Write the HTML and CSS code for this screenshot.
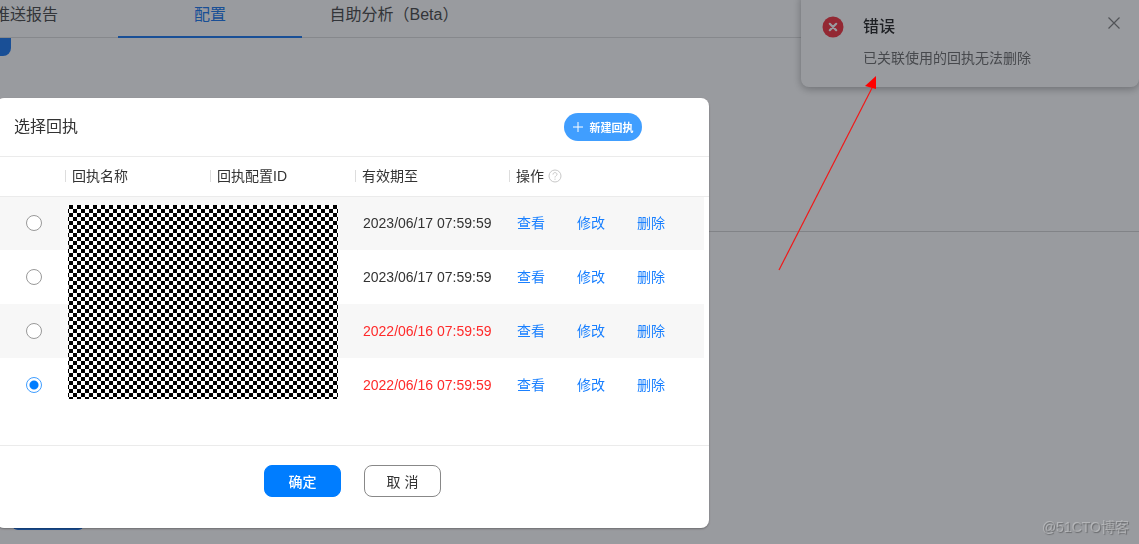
FILE: index.html
```html
<!DOCTYPE html>
<html lang="zh-CN">
<head>
    <meta charset="UTF-8">
    <meta name="viewport" content="width=device-width, initial-scale=1.0">
    <title>选择回执</title>
    <link rel="stylesheet" href="styles.css">
</head>
<body>
    <!-- 底层页面 -->
    <div class="page">
        <nav class="tabs">
            <a href="#" class="tab">推送报告</a>
            <a href="#" class="tab active">配置</a>
            <a href="#" class="tab">自助分析（Beta）</a>
        </nav>
        <div class="section">
            <div class="section-tag"></div>
        </div>
        <button type="button" class="page-btn" aria-label="保存"></button>
    </div>

    <!-- 错误通知 -->
    <div class="notification" role="alert">
        <svg class="error-icon" viewBox="0 0 22 22">
            <circle cx="11" cy="11" r="10.5" fill="#f5404c"/>
            <path d="M7.8 7.8l6.4 6.4M14.2 7.8l-6.4 6.4" stroke="#fff" stroke-width="2.2" stroke-linecap="round"/>
        </svg>
        <div class="notification-body">
            <h2 class="notification-title">错误</h2>
            <p class="notification-text">已关联使用的回执无法删除</p>
        </div>
        <button type="button" class="close-btn" aria-label="关闭">
            <svg viewBox="0 0 12 12"><path d="M.5 .5l11 11M11.5 .5l-11 11" stroke="#888" stroke-width="1.2"/></svg>
        </button>
    </div>

    <!-- 遮罩和对话框 -->
    <div class="mask">
        <div class="dialog" role="dialog" aria-labelledby="dialog-title">
            <div class="dialog-header">
                <h1 class="dialog-title" id="dialog-title">选择回执</h1>
                <button type="button" class="create-btn">
                    <svg viewBox="0 0 10 10"><path d="M5 0v10M0 5h10" stroke="#fff" stroke-width="1"/></svg>
                    <span>新建回执</span>
                </button>
            </div>
            <div class="dialog-body">
                <table class="receipt-table">
                    <colgroup>
                        <col class="col-radio">
                        <col class="col-name">
                        <col class="col-id">
                        <col class="col-date">
                        <col>
                        <col class="col-gutter">
                    </colgroup>
                    <thead>
                        <tr>
                            <th></th>
                            <th><span class="head">回执名称</span></th>
                            <th><span class="head">回执配置ID</span></th>
                            <th><span class="head">有效期至</span></th>
                            <th>
                                <span class="head">操作
                                    <svg class="help-icon" viewBox="0 0 14 14" fill="none" stroke="#c8c8c8">
                                        <circle cx="7" cy="7" r="6"/>
                                        <path d="M5 5.6C5 4.4 5.8 3.6 7 3.6s2 .8 2 1.8c0 1.3-2 1.5-2 3.1M7 9.6v1.2"/>
                                    </svg>
                                </span>
                            </th>
                            <th class="gutter"></th>
                        </tr>
                    </thead>
                    <tbody>
                        <tr>
                            <td><input type="radio" name="receipt" class="radio" aria-label="回执一"></td>
                            <td></td>
                            <td></td>
                            <td>2023/06/17 07:59:59</td>
                            <td><div class="links"><a href="#">查看</a><a href="#">修改</a><a href="#">删除</a></div></td>
                            <td class="gutter"></td>
                        </tr>
                        <tr>
                            <td><input type="radio" name="receipt" class="radio" aria-label="回执二"></td>
                            <td></td>
                            <td></td>
                            <td>2023/06/17 07:59:59</td>
                            <td><div class="links"><a href="#">查看</a><a href="#">修改</a><a href="#">删除</a></div></td>
                            <td class="gutter"></td>
                        </tr>
                        <tr>
                            <td><input type="radio" name="receipt" class="radio" aria-label="回执三"></td>
                            <td></td>
                            <td></td>
                            <td class="expired">2022/06/16 07:59:59</td>
                            <td><div class="links"><a href="#">查看</a><a href="#">修改</a><a href="#">删除</a></div></td>
                            <td class="gutter"></td>
                        </tr>
                        <tr>
                            <td><input type="radio" name="receipt" class="radio" aria-label="回执四" checked></td>
                            <td></td>
                            <td></td>
                            <td class="expired">2022/06/16 07:59:59</td>
                            <td><div class="links"><a href="#">查看</a><a href="#">修改</a><a href="#">删除</a></div></td>
                            <td class="gutter"></td>
                        </tr>
                    </tbody>
                </table>
                <!-- 马赛克，盖住名称和ID -->
                <div class="mosaic"></div>
            </div>
            <div class="dialog-footer">
                <button type="button" class="btn btn-primary">确定</button>
                <button type="button" class="btn">取 消</button>
            </div>
        </div>
    </div>

    <!-- 红色标注箭头 -->
    <svg class="arrow" viewBox="0 0 100 196">
        <path d="M1 194L94 12" stroke="#f01818" stroke-width="1.2"/>
        <path d="M98 0L87 10L98 13Z" fill="#f00"/>
    </svg>

    <div class="watermark">@51CTO博客</div>
</body>
</html>
```
FILE: styles.css
```css
* {
    box-sizing: border-box;
}

body {
    margin: 0;
    min-height: 100vh;
    overflow: hidden;
    font-family: "Liberation Sans", "Noto Sans CJK SC", sans-serif;
    font-size: 14px;
    line-height: 20px;
    color: #333;
    background-color: #fff;
}

h1, h2, p {
    margin: 0;
    font-weight: normal;
}

a {
    text-decoration: none;
}

button {
    font-family: inherit;
    border: none;
    padding: 0;
    cursor: pointer;
}

/* 底层页面 */
.tabs {
    display: flex;
    height: 38px;
    margin-left: -66px; /* 标签栏向左滚动了一段 */
    border-bottom: 1px solid #e0e0e0;
}

.tab {
    flex: none;
    width: 184px;
    height: 38px;
    padding-top: 5px;
    text-align: center;
    font-size: 16px;
    color: #555;
}

.tab.active {
    color: #2a80f0;
    border-bottom: 2px solid #2a80f0;
}

.section {
    height: 194px;
    border-bottom: 1px solid #d8d8d8;
}

.section-tag {
    width: 11px;
    height: 18px;
    background-color: #2a80f0;
    border-bottom-right-radius: 8px;
}

.page-btn {
    display: block;
    width: 72px;
    height: 32px;
    margin: 266px 0 0 12px;
    background-color: #2a80f0;
    border-radius: 6px;
}

/* 错误通知 */
.notification {
    position: fixed;
    top: -8px;
    right: 0;
    display: flex;
    width: 338px;
    padding: 24px 19px 19px 21px;
    background-color: #fff;
    border-radius: 8px;
    box-shadow: 0 2px 8px rgba(0, 0, 0, 0.3);
}

.error-icon {
    flex: none;
    width: 22px;
    height: 22px;
}

.notification-body {
    flex: 1;
    margin-left: 19px;
}

.notification-title {
    font-size: 16px;
    line-height: 22px;
    font-weight: 500;
    color: #333;
}

.notification-text {
    margin-top: 10px;
    color: #777;
}

.close-btn {
    width: 12px;
    height: 12px;
    margin-top: 1px;
    background: none;
}

.close-btn svg {
    display: block;
}

/* 遮罩和对话框 */
.mask {
    position: fixed;
    inset: 0;
    padding: 98px 430px 0 0;
    background-color: rgba(0, 4, 14, 0.4);
}

.dialog {
    margin-left: -4px;
    background-color: #fff;
    border-radius: 8px;
    box-shadow: 0 1px 2px rgba(0, 0, 0, 0.3);
}

.dialog-header {
    display: flex;
    align-items: center;
    justify-content: space-between;
    height: 59px;
    padding: 0 67px 0 18px;
    border-bottom: 1px solid #ebebeb;
}

.dialog-title {
    font-size: 16px;
}

.create-btn {
    display: flex;
    align-items: center;
    justify-content: center;
    gap: 7px;
    width: 78px;
    height: 28px;
    font-size: 11px;
    font-weight: bold;
    color: #fff;
    background-color: #409eff;
    border-radius: 14px;
}

.create-btn svg {
    width: 10px;
    height: 10px;
}

.dialog-body {
    position: relative;
    padding-bottom: 33px;
    border-bottom: 1px solid #ebebeb;
}

.receipt-table {
    width: 100%;
    table-layout: fixed;
    border-collapse: collapse;
}

.col-radio {
    width: 69px;
}

.col-name,
.col-id {
    width: 145px;
}

.col-date {
    width: 154px;
}

.col-gutter {
    width: 5px;
}

th {
    height: 39px;
    padding: 0;
    font-weight: normal;
    text-align: left;
    border-bottom: 1px solid #ebebeb;
}

.head {
    display: flex;
    align-items: center;
    gap: 4px;
}

.head::before {
    content: "";
    width: 1px;
    height: 12px;
    margin-right: 2px;
    background-color: #ddd;
}

.help-icon {
    width: 14px;
    height: 14px;
}

td {
    height: 54px;
    padding: 0 0 0 8px;
}

td:first-child {
    padding-left: 30px;
}

td.gutter {
    padding: 0;
}

tbody tr:nth-child(odd) td:not(.gutter) {
    background-color: #f7f7f7;
}

.expired {
    color: #ff2a2a;
}

.links {
    display: flex;
    gap: 32px;
}

.links a {
    color: #1a80ff;
}

.radio {
    appearance: none;
    display: block;
    width: 16px;
    height: 16px;
    margin: 0;
    background-color: #fff;
    border: 1px solid #999;
    border-radius: 50%;
}

.radio:checked {
    border-color: #409eff;
    background-image: radial-gradient(circle, #007dff 4px, transparent 5px);
}

.mosaic {
    position: absolute;
    top: 48px;
    left: 72px;
    width: 270px;
    height: 194px;
    background-image: conic-gradient(#fff 25%, #000 0 50%, #fff 0 75%, #000 0);
    background-size: 8px 8px;
    background-position: 1px 0;
}

.dialog-footer {
    display: flex;
    justify-content: center;
    gap: 23px;
    padding: 19px 0 31px;
}

.btn {
    width: 77px;
    height: 32px;
    font-size: 14px;
    color: #333;
    background-color: #fff;
    border: 1px solid #888;
    border-radius: 8px;
}

.btn-primary {
    font-weight: 500;
    color: #fff;
    background-color: #007dff;
    border-color: #007dff;
}

/* 标注箭头 */
.arrow {
    position: fixed;
    top: 76px;
    right: 261px;
    width: 100px;
    height: 196px;
    pointer-events: none;
}

/* 水印 */
.watermark {
    position: fixed;
    right: 10px;
    bottom: 7px;
    color: rgba(255, 255, 255, 0.3);
    text-shadow: 1px 1px 1px rgba(0, 0, 0, 0.3);
}
```
